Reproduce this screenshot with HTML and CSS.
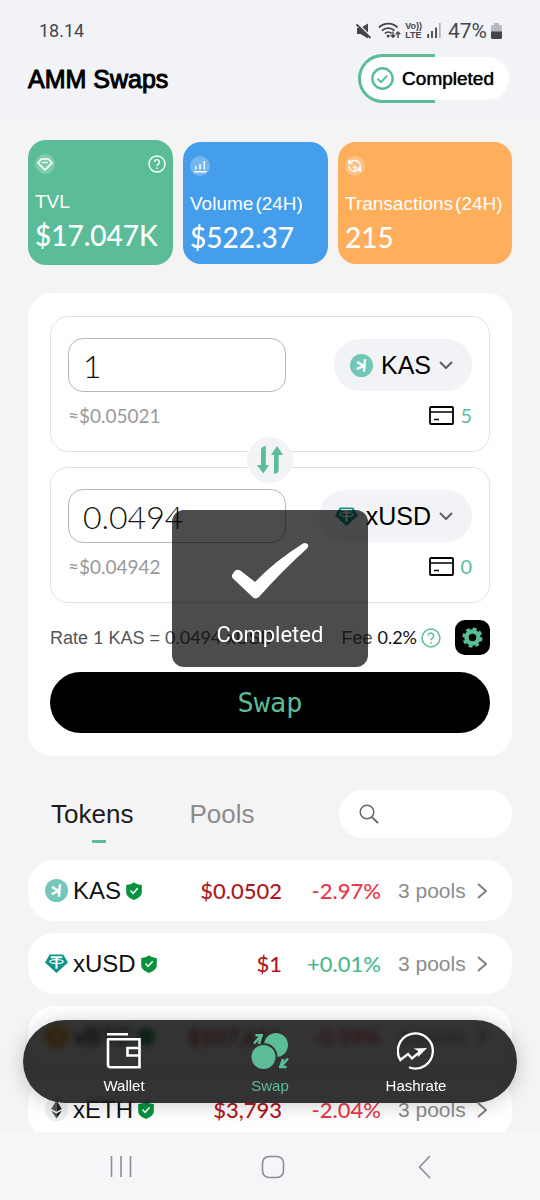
FILE: index.html
```html
<!DOCTYPE html>
<html lang="en">
<head>
<meta charset="utf-8">
<meta name="viewport" content="width=device-width, initial-scale=1">
<title>AMM Swaps</title>
<link rel="stylesheet" href="styles.css">
</head>
<body>
<svg class="defs" aria-hidden="true">
  <symbol id="kas" viewBox="0 0 24 24"><circle cx="12" cy="12" r="12" fill="#70c7ba"/><path d="M15.600 5.500l-1 13M7.400 8.200l7.300 4.600M7 15.800l7.800-3.600" stroke="#fff" stroke-width="2.600" fill="none"/></symbol>
  <symbol id="usd" viewBox="0 0 24 24"><path d="M5 2.500h14L24 11 12 22 0 11z" fill="#0f9488"/><path d="M6 5.500h12M12 5.500v12" stroke="#fff" stroke-width="2.200"/><ellipse cx="12" cy="10" rx="7" ry="2" fill="none" stroke="#fff" stroke-width="1.300"/></symbol>
  <symbol id="btc" viewBox="0 0 24 24"><circle cx="12" cy="12" r="12" fill="#f7a21b"/><path d="M9 6v12M9 6.500h4a2.500 2.500 0 0 1 0 5.500H9M9 12h5a2.700 2.700 0 0 1 0 5.500H9" stroke="#fff" stroke-width="2" fill="none"/></symbol>
  <symbol id="eth" viewBox="0 0 24 24"><circle cx="12" cy="12" r="12" fill="#eceff0"/><path d="M12 2.500v11.800l-5.500-2.800z" fill="#555"/><path d="M12 2.500v11.800l5.500-2.800z" fill="#222"/><path d="M6.500 13.200L12 16.200v5.300z" fill="#555"/><path d="M17.500 13.200L12 16.200v5.300z" fill="#111"/></symbol>
  <symbol id="shield" viewBox="0 0 16 18"><path d="M8 .3c2.500 1.900 5 2.400 7.800 2.600v7.300c0 3.600-3.400 6-7.800 7.700C3.600 16.200.2 13.800.2 10.200V2.900C3 2.700 5.500 2.200 8 .3z" fill="#06923f"/><path d="M4.500 8.600l2.600 2.700 4.600-5" stroke="#fff" stroke-width="1.500" fill="none"/></symbol>
  <symbol id="right" viewBox="0 0 10 16"><path d="M1 1l8 7-8 7" fill="none" stroke="#808080" stroke-width="2"/></symbol>
  <symbol id="down" viewBox="0 0 14 8"><path d="M1 1l6 6 6-6" fill="none" stroke="#5d5f66" stroke-width="2"/></symbol>
  <symbol id="card" viewBox="0 0 25 19"><rect x="1" y="1" width="23" height="17" rx="1" fill="none" stroke="#000" stroke-width="1.800"/><path d="M1 6h23M5 13.500h5" stroke="#000" stroke-width="1.600"/></symbol>
  <symbol id="help" viewBox="0 0 20 20"><circle cx="10" cy="10" r="8.900" fill="none" stroke="currentColor" stroke-width="1.500"/><path d="M7.300 7.800a2.700 2.700 0 1 1 4.300 2.100c-1 .8-1.600 1.300-1.600 2.400M10 14v1.500" fill="none" stroke="currentColor" stroke-width="1.500"/></symbol>
</svg>

<div class="screen">
  <header class="top">
    <div class="status">
      <span class="clock">18.14</span>
      <div class="status-icons">
        <svg width="16" height="16" viewBox="0 0 16 16"><path d="M1 5h3.500L12 .5v15L4.500 11H1z" fill="#45464b"/><path d="M1.500 .5l14 13.500" stroke="#f2f3f7" stroke-width="1.600"/><path d="M.5 1.500l14 13.500" stroke="#45464b" stroke-width="1.800"/></svg>
        <svg class="wifi" width="23" height="17" viewBox="0 0 23 17"><g fill="none" stroke="#45464b" stroke-width="1.800"><path d="M1 5.500a13 13 0 0 1 18.500 0M4 8.700a8.800 8.800 0 0 1 12.500 0M7 11.500a4.600 4.600 0 0 1 6.500 0"/><path d="M15 9.500v5.500M12.800 13l2.200 2.300 2.200-2.300M20 16v-5.500M17.800 12.300L20 10l2.200 2.300" stroke-width="1.400"/></g><circle cx="10.200" cy="14" r="1.500" fill="#45464b"/></svg>
        <span class="volte"><span>Vo))</span><span>LTE</span></span>
        <svg class="signal" width="14" height="15" viewBox="0 0 14 15"><path d="M1.200 11v4M5 8v7M9 4.500V15" stroke="#45464b" stroke-width="1.800"/><path d="M12.800 0v15" stroke="#b5b6ba" stroke-width="1.800"/></svg>
        <span class="percent">47%</span>
        <svg width="11" height="16" viewBox="0 0 11 16"><path d="M3 0h5v2h1.500Q11 2 11 3.500V9H0V3.500Q0 2 1.500 2H3z" fill="#b9babf"/><path d="M0 8.500h11v6q0 1.500-1.500 1.500h-8Q0 16 0 14.500z" fill="#45464b"/></svg>
      </div>
    </div>
    <div class="title-row">
      <h1 class="title">AMM Swaps</h1>
      <div class="state">
        <svg width="23" height="23" viewBox="0 0 23 23"><circle cx="11.500" cy="11.500" r="10.200" fill="none" stroke="#5abd98" stroke-width="2.400"/><path d="M6.500 11.800l3.500 3.400 6.300-6.600" fill="none" stroke="#5abd98" stroke-width="2"/></svg>
        <span>Completed</span>
      </div>
    </div>
  </header>

  <main class="content">
    <section class="stats">
      <article class="stat stat-tvl">
        <div class="stat-icons">
          <svg width="20" height="20" viewBox="0 0 20 20"><circle cx="10" cy="10" r="10" fill="#fff" opacity=".22"/><path d="M6.500 5h7L17 9l-7 7-7-7z" fill="none" stroke="#fff" stroke-width="1.600" stroke-linejoin="round"/><path d="M7 8.500h6" stroke="#fff" stroke-width="1.300"/></svg>
          <svg class="stat-help" width="18" height="18"><use href="#help"/></svg>
        </div>
        <p class="stat-label">TVL</p>
        <p class="stat-value">$17.047K</p>
      </article>
      <article class="stat stat-volume">
        <div class="stat-icons">
          <svg width="20" height="20" viewBox="0 0 20 20"><circle cx="10" cy="10" r="10" fill="#fff" opacity=".25"/><path d="M5.800 13.500V10M10 13.500V8M14.300 13.500V5M4 15.800h12.500" stroke="#fff" stroke-width="1.500"/></svg>
        </div>
        <p class="stat-label">Volume<span class="paren">(24H)</span></p>
        <p class="stat-value">$522.37</p>
      </article>
      <article class="stat stat-tx">
        <div class="stat-icons">
          <svg width="20" height="20" viewBox="0 0 20 20"><circle cx="10" cy="10" r="10" fill="#fff" opacity=".25"/><path d="M4 4v3.500h3.500M4 7.500C6 3.500 13 3 15.500 8.500M3.800 10c.3 2.500 1.400 4 3.200 5" fill="none" stroke="#fff" stroke-width="1.400"/><path d="M8.300 11.800c.3-1.400 3-1.300 2.800.2-.1 1-1.600 1.800-2.800 3.200h3.200M15.200 15.800v-5.300l-2.700 3.500h3.700" fill="none" stroke="#fff" stroke-width="1.400"/></svg>
        </div>
        <p class="stat-label">Transactions<span class="paren">(24H)</span></p>
        <p class="stat-value">215</p>
      </article>
    </section>

    <form class="swap-card">
      <div class="legs">
        <div class="leg">
          <div class="leg-main">
            <input class="amount" type="text" inputmode="decimal" value="1" aria-label="Amount to pay">
            <div class="picker">
              <svg width="23" height="23"><use href="#kas"/></svg>
              <select class="token-select" aria-label="Token to pay"><option>KAS</option><option>xUSD</option></select>
              <svg class="caret" width="14" height="8"><use href="#down"/></svg>
            </div>
          </div>
          <div class="leg-info">
            <span class="approx">≈$0.05021</span>
            <span class="balance"><svg width="25" height="19"><use href="#card"/></svg>5</span>
          </div>
        </div>
        <button class="flip" type="button" aria-label="Switch tokens">
          <svg width="26" height="28" viewBox="0 0 26 28"><path d="M8.800 0v19H12L6.300 27.500 0 19h4V4Q4.200.5 8.800 0zM17 28V9h-3L20 0l6 9h-4.300v15q-.2 3.500-4.700 4z" fill="#5abd98"/></svg>
        </button>
        <div class="leg">
          <div class="leg-main">
            <input class="amount" type="text" inputmode="decimal" value="0.0494" aria-label="Amount to receive">
            <div class="picker">
              <svg width="23" height="23"><use href="#usd"/></svg>
              <select class="token-select" aria-label="Token to receive"><option>xUSD</option><option>KAS</option></select>
              <svg class="caret" width="14" height="8"><use href="#down"/></svg>
            </div>
          </div>
          <div class="leg-info">
            <span class="approx">≈$0.04942</span>
            <span class="balance"><svg width="25" height="19"><use href="#card"/></svg>0</span>
          </div>
        </div>
      </div>
      <div class="rate-row">
        <span class="rate">Rate <span class="num">1</span> KAS = <span class="num">0.0494</span> xUSD</span>
        <span class="fee">Fee <span class="num fee-value">0.2%</span></span>
        <button class="fee-help" type="button" aria-label="About the fee"><svg width="20" height="20"><use href="#help"/></svg></button>
        <button class="settings" type="button" aria-label="Settings">
          <svg width="21" height="21" viewBox="0 0 21 21"><circle cx="10.500" cy="10.500" r="6" fill="none" stroke="#5abd98" stroke-width="4.500"/><circle cx="10.500" cy="10.500" r="8.800" fill="none" stroke="#5abd98" stroke-width="2.600" stroke-dasharray="3.800 3.110"/></svg>
        </button>
      </div>
      <button class="swap-button" type="button">Swap</button>
    </form>

    <div class="list-head">
      <div class="tabs" role="tablist">
        <button class="tab tab-active" role="tab" aria-selected="true" type="button">Tokens</button>
        <button class="tab" role="tab" aria-selected="false" type="button">Pools</button>
      </div>
      <label class="search">
        <svg width="20" height="20" viewBox="0 0 20 20"><circle cx="8" cy="8" r="6.800" fill="none" stroke="#666" stroke-width="1.500"/><path d="M12.800 12.800L19 19" stroke="#666" stroke-width="1.800"/></svg>
        <input class="search-input" type="search" aria-label="Search tokens">
      </label>
    </div>

    <table class="tokens">
      <tbody>
        <tr><td class="token-name"><span class="token-line"><svg width="23" height="23"><use href="#kas"/></svg><span>KAS</span><svg class="shield" width="16" height="18"><use href="#shield"/></svg></span></td><td class="price">$0.0502</td><td class="change loss">-2.97%</td><td class="pools"><span class="pools-line">3 pools<svg width="10" height="16"><use href="#right"/></svg></span></td></tr>
        <tr><td class="token-name"><span class="token-line"><svg width="23" height="23"><use href="#usd"/></svg><span>xUSD</span><svg class="shield" width="16" height="18"><use href="#shield"/></svg></span></td><td class="price">$1</td><td class="change gain">+0.01%</td><td class="pools"><span class="pools-line">3 pools<svg width="10" height="16"><use href="#right"/></svg></span></td></tr>
        <tr><td class="token-name"><span class="token-line"><svg width="23" height="23"><use href="#btc"/></svg><span>xBTC</span><svg class="shield" width="16" height="18"><use href="#shield"/></svg></span></td><td class="price">$107,611</td><td class="change loss">-0.59%</td><td class="pools"><span class="pools-line">3 pools<svg width="10" height="16"><use href="#right"/></svg></span></td></tr>
        <tr><td class="token-name"><span class="token-line"><svg width="23" height="23"><use href="#eth"/></svg><span>xETH</span><svg class="shield" width="16" height="18"><use href="#shield"/></svg></span></td><td class="price">$3,793</td><td class="change loss">-2.04%</td><td class="pools"><span class="pools-line">3 pools<svg width="10" height="16"><use href="#right"/></svg></span></td></tr>
      </tbody>
    </table>
  </main>

  <nav class="tabbar">
    <a class="tabbar-item" href="#wallet">
      <svg width="38" height="38" viewBox="0 0 38 38"><path d="M2 2.200h21M2 7.200h32.500v28H5.500Q3 35.200 3 32.700V7M34 16H22.500v7.500H34" fill="none" stroke="#fff" stroke-width="2.600"/></svg>
      <span>Wallet</span>
    </a>
    <a class="tabbar-item tabbar-active" href="#swap">
      <svg width="38" height="38" viewBox="0 0 38 38"><circle cx="25" cy="13" r="12" fill="#5abd98"/><circle cx="12.500" cy="25" r="14" fill="#333"/><circle cx="12.500" cy="25" r="12" fill="#5abd98"/><path d="M3 11.500L10.500 3M4.500 3.200H12M10.500 3L8 12M37 26.500L29.500 35M35.500 35H28M29.500 35L32 27" fill="none" stroke="#5abd98" stroke-width="2.600"/></svg>
      <span>Swap</span>
    </a>
    <a class="tabbar-item" href="#hashrate">
      <svg width="38" height="38" viewBox="0 0 38 38"><path d="M4 29A17.500 17.500 0 1 1 12 35.300M2.500 28.500L11 22l4 4.500 10-8.500" fill="none" stroke="#fff" stroke-width="2.300"/><path d="M16.500 16.500l13.500-.5-9 9 .3-6z" fill="#fff"/></svg>
      <span>Hashrate</span>
    </a>
  </nav>

  <div class="toast" role="status">
    <svg width="78" height="58" viewBox="0 0 78 58"><path d="M2 31.500Q5 25.500 10 29L24 40Q44 19 72 1.500 75 0 77 2.500 78 4 76 6.500 50 30 28 55 24.500 58 21 54.500L1.500 36Q0 34 2 31.500z" fill="#fff"/></svg>
    <span>Completed</span>
  </div>

  <footer class="system-nav">
    <button class="system-button" type="button" aria-label="Recents"><svg width="22" height="24" viewBox="0 0 22 24"><path d="M1.500 1v21M11 1v21M20.500 1v21" stroke="#8c8d91" stroke-width="1.600"/></svg></button>
    <button class="system-button" type="button" aria-label="Home"><svg width="24" height="24" viewBox="0 0 24 24"><rect x="1.500" y="1.500" width="21" height="21" rx="6.500" fill="none" stroke="#8c8d91" stroke-width="1.600"/></svg></button>
    <button class="system-button" type="button" aria-label="Back"><svg width="13" height="24" viewBox="0 0 13 24"><path d="M12 1L1.500 12 12 23" fill="none" stroke="#8c8d91" stroke-width="1.600"/></svg></button>
  </footer>
</div>
</body>
</html>
```
FILE: styles.css
```css
* { box-sizing: border-box; }

body {
  margin: 0;
  font-family: "Liberation Sans", Arial, sans-serif;
  color: #111;
  background: #f4f4f4;
}

button { font: inherit; color: inherit; border: 0; padding: 0; background: none; cursor: pointer; }
svg { display: block; flex: none; }
p, h1 { margin: 0; }
.defs { position: absolute; width: 0; height: 0; }

.screen {
  position: relative;
  display: flex;
  flex-direction: column;
  height: 100vh;
}

/* Header */
.top { background: #f2f3f7; padding-bottom: 16px; }
.status {
  display: flex;
  justify-content: space-between;
  align-items: center;
  height: 54px;
  padding: 7px 38px 0 39px;
  font: 18px Roboto, sans-serif;
  color: #45464b;
}
.status-icons { display: flex; align-items: center; }
.wifi { margin-left: 6px; }
.volte { display: flex; flex-direction: column; margin: 0 5px 0 4px; font: bold 9px/9px "Liberation Sans", sans-serif; }
.signal { margin-right: 7px; }
.percent { font-size: 21px; margin-right: 4px; }
.title-row { display: flex; justify-content: space-between; align-items: center; padding: 0 28px; }
.title { font-size: 25px; line-height: 28px; font-weight: 400; color: #000; -webkit-text-stroke: 1px #000; }
.state {
  display: flex;
  align-items: center;
  gap: 8px;
  height: 49px;
  padding: 0 15px 0 10px;
  font-size: 19px;
  color: #000;
  text-shadow: 0 0 1px #000;
  border: 3px solid transparent;
  border-radius: 25px;
  background:
    linear-gradient(#fff, #fff) padding-box,
    linear-gradient(90deg, #5abd98 50%, #f4f4f7 50%) border-box;
}

/* Scrolling content */
.content {
  flex: 1;
  min-height: 0;
  overflow-y: auto;
  scrollbar-width: none;
  padding: 21px 28px 0;
  background: #f4f4f4;
}

.stats { display: grid; grid-template-columns: 5fr 5fr 6fr; gap: 10px; align-items: center; }
.stat { padding: 14px 7px 10px; border-radius: 18px; color: #fff; }
.stat-tvl { background: #5abd98; padding-bottom: 13px; }
.stat-volume { background: #459eeb; }
.stat-tx { background: #ffae5b; }
.stat-icons { display: flex; justify-content: space-between; align-items: center; height: 20px; }
.stat-label { margin-top: 17px; font-size: 19px; line-height: 22px; white-space: nowrap; }
.paren { margin-left: 2px; }
.stat-value { margin-top: 5px; font: 500 28px/34px Lato, sans-serif; }

/* Swap form */
.swap-card { margin-top: 28px; padding: 23px 22px; border-radius: 24px; background: #fff; }
.legs { position: relative; display: grid; gap: 15px; }
.leg { padding: 21px 17px 24px; border: 1px solid #e2e2e2; border-radius: 18px; }
.leg-main, .leg-info { display: flex; justify-content: space-between; align-items: center; }
.leg-info { margin-top: 11px; height: 24px; }
.amount {
  width: 54%;
  height: 54px;
  padding: 0 14px;
  border: 1px solid #b8b8b8;
  border-radius: 15px;
  background: transparent;
  font: 300 32px Lato, sans-serif;
  color: #111;
}
.picker {
  position: relative;
  display: flex;
  align-items: center;
  gap: 8px;
  height: 52px;
  padding: 0 19px 0 16px;
  border-radius: 26px;
  background: #f2f3f7;
}
.token-select {
  appearance: none;
  field-sizing: content;
  border: 0;
  padding: 0;
  background: transparent;
  font: 25px "Liberation Sans", Arial, sans-serif;
  color: #000;
}
.approx { font: 19px Lato, sans-serif; color: #999; }
.balance { display: flex; align-items: center; gap: 6px; font: 20px Lato, sans-serif; color: #5abd98; }
.flip {
  position: absolute;
  left: 50%;
  top: 50%;
  transform: translate(-50%, -50%);
  display: grid;
  place-items: center;
  width: 46px;
  height: 46px;
  border-radius: 50%;
  background: #f2f3f7;
}
.rate-row { display: flex; align-items: center; margin-top: 17px; font-size: 18px; color: #555; white-space: nowrap; }
.num { font-family: Lato, sans-serif; }
.fee { margin-left: auto; }
.fee-value { color: #111; }
.fee-help { margin-left: 4px; color: #5abd98; }
.settings {
  display: grid;
  place-items: center;
  width: 35px;
  height: 35px;
  margin-left: 14px;
  border-radius: 10px;
  background: #000;
}
.swap-button {
  display: block;
  width: 100%;
  height: 61px;
  margin-top: 17px;
  border-radius: 31px;
  background: #000;
  color: #5abd98;
  font: 27px "DejaVu Sans Mono", monospace;
}

/* Token list */
.list-head { display: flex; justify-content: space-between; align-items: center; margin-top: 34px; }
.tabs { display: flex; gap: 56px; padding-left: 23px; }
.tab { position: relative; font-size: 26px; line-height: 48px; color: #8b8b8b; }
.tab-active { color: #1c1c1c; }
.tab-active::after {
  content: "";
  position: absolute;
  left: 50%;
  bottom: -5px;
  width: 14px;
  height: 3px;
  background: #5abd98;
}
.search {
  display: flex;
  align-items: center;
  gap: 10px;
  width: 173px;
  height: 48px;
  padding: 0 20px;
  border-radius: 24px;
  background: #fff;
}
.search-input { flex: 1; min-width: 0; border: 0; padding: 0; background: transparent; font-size: 18px; }

.tokens { width: 100%; margin-top: 10px; border-collapse: separate; border-spacing: 0 12px; white-space: nowrap; }
.tokens td { height: 61px; padding: 0; background: #fff; }
.tokens .token-name { padding-left: 17px; border-radius: 26px 0 0 26px; font-size: 24px; }
.token-line { display: flex; align-items: center; gap: 5px; }
.price, .change { font: 500 22px Lato, sans-serif; text-align: right; }
.price { color: #b0161c; }
.change { width: 99px; }
.loss { color: #e73a4c; }
.gain { color: #4db88e; }
.tokens .pools { width: 131px; padding: 0 25px 0 17px; border-radius: 0 26px 26px 0; font-size: 21px; color: #8b8b8b; }
.pools-line { display: flex; justify-content: space-between; align-items: center; }

/* Floating navigation */
.tabbar {
  position: absolute;
  left: 23px;
  right: 23px;
  bottom: 97px;
  display: flex;
  height: 83px;
  padding: 12px 28px 0;
  border-radius: 42px;
  background: rgba(0, 0, 0, 0.8);
  backdrop-filter: blur(3px);
  box-shadow: 0 2px 20px rgba(0, 0, 0, 0.2);
}
.tabbar-item {
  flex: 1;
  display: flex;
  flex-direction: column;
  align-items: center;
  gap: 6px;
  color: #fff;
  font-size: 15px;
  line-height: 20px;
  text-decoration: none;
}
.tabbar-active { color: #5abd98; }

.toast {
  position: absolute;
  left: 50%;
  top: 510px;
  transform: translateX(-50%);
  display: flex;
  flex-direction: column;
  align-items: center;
  gap: 22px;
  width: 196px;
  padding: 32px 0 19px;
  border-radius: 12px;
  background: rgba(0, 0, 0, 0.7);
  color: #fff;
  font: 22px/26px Roboto, sans-serif;
}

.system-nav { z-index: 1; display: flex; height: 68px; padding: 2px 40px 0 45px; background: #f5f6f8; }
.system-button { flex: 1; display: grid; place-items: center; }
```
